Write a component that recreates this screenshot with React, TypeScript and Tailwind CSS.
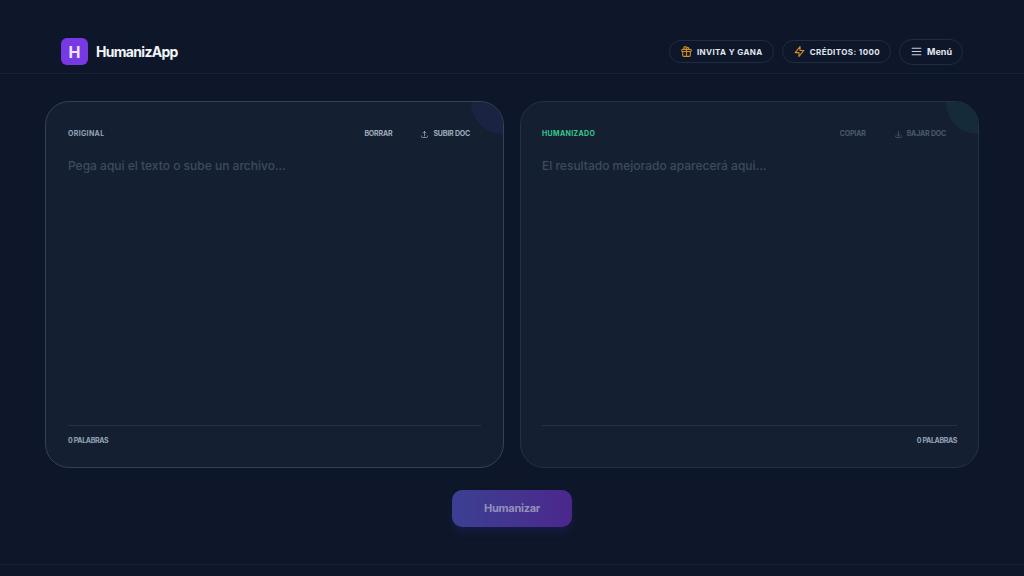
import { useState, type ReactNode } from 'react'
import { HiOutlineDownload, HiOutlineGift, HiOutlineLightningBolt, HiOutlineMenu, HiOutlineUpload } from 'react-icons/hi'

const countWords = (text: string) => text.split(/\s+/).filter(Boolean).length

export default function App() {
  const [original, setOriginal] = useState('')

  return (
    <div className="min-h-screen bg-[#0e1729] font-['Inter',sans-serif] text-slate-100">
      <header className="flex items-center justify-between border-b border-[#172336] px-[61px] pt-[38px] pb-2">
        <a href="#" className="flex items-center gap-2">
          <span className="flex h-[27px] w-[27px] items-center justify-center rounded-md bg-[#7639e4] text-base font-bold text-[#ebe4fb]">
            H
          </span>
          <span className="text-sm font-bold tracking-tighter">HumanizApp</span>
        </a>
        <nav className="flex items-center gap-2">
          <HeaderPill>
            <HiOutlineGift className="h-[13px] w-[13px] text-[#d18f22]" aria-hidden="true" />
            INVITA Y GANA
          </HeaderPill>
          <HeaderPill>
            <HiOutlineLightningBolt className="h-[13px] w-[13px] text-[#d18f22]" aria-hidden="true" />
            CRÉDITOS: 1000
          </HeaderPill>
          <button type="button" className="flex h-[26px] items-center gap-1 rounded-full border border-[#202c3f] px-2.5 text-[9px] font-bold text-slate-200">
            <HiOutlineMenu className="h-[13px] w-[13px] text-slate-300" aria-hidden="true" />
            Menú
          </button>
        </nav>
      </header>

      <main className="px-[45px] pt-[27px]">
        <div className="grid grid-cols-2 gap-4">
          <section className="relative overflow-hidden rounded-3xl border border-[#344252] bg-[#142031] px-[22px] pt-[22px] pb-[21px]">
            <div className="absolute -top-8 -right-8 h-16 w-16 rounded-full bg-[#1a2442]" />
            <div className="relative flex h-5 items-center justify-between">
              <label htmlFor="original" className="text-[7px] font-bold tracking-wider text-[#94a3b8]">
                ORIGINAL
              </label>
              <div className="flex items-center gap-1.5">
                <CardButton onClick={() => setOriginal('')}>BORRAR</CardButton>
                <CardButton>
                  <HiOutlineUpload className="h-[9px] w-[9px]" aria-hidden="true" />
                  SUBIR DOC
                </CardButton>
              </div>
            </div>
            <textarea
              id="original"
              value={original}
              onChange={(event) => setOriginal(event.target.value)}
              placeholder="Pega aqui el texto o sube un archivo..."
              className="relative mt-3 block h-[269px] w-full resize-none bg-transparent text-xs leading-5 font-medium text-slate-200 outline-none placeholder:text-[#3d4b60]"
            />
            <WordCount count={countWords(original)} />
          </section>

          <section className="relative overflow-hidden rounded-3xl border border-[#223242] bg-[#142031] px-[21px] pt-[22px] pb-[21px]">
            <div className="absolute -top-8 -right-8 h-16 w-16 rounded-full bg-[#162b39]" />
            <div className="relative flex h-5 items-center justify-between">
              <label htmlFor="humanized" className="text-[7px] font-bold tracking-wider text-[#34c88f]">
                HUMANIZADO
              </label>
              <div className="flex items-center gap-1.5">
                <CardButton disabled>COPIAR</CardButton>
                <CardButton disabled>
                  <HiOutlineDownload className="h-[9px] w-[9px]" aria-hidden="true" />
                  BAJAR DOC
                </CardButton>
              </div>
            </div>
            <textarea
              id="humanized"
              readOnly
              placeholder="El resultado mejorado aparecerá aqui..."
              className="relative mt-3 block h-[269px] w-full resize-none bg-transparent text-xs leading-5 font-medium text-slate-200 outline-none placeholder:text-[#3d4b60]"
            />
            <WordCount count={0} alignEnd />
          </section>
        </div>

        <div className="flex justify-center pt-[22px] pb-[37px]">
          <button
            type="button"
            disabled={!original}
            className="h-[37px] w-[120px] rounded-[10px] bg-linear-to-r from-[#3b3f92] to-[#4b278d] text-[11px] font-bold tracking-tight text-[#9490b8] shadow-[0_6px_10px_-2px_#2a247566]"
          >
            Humanizar
          </button>
        </div>
      </main>

      <footer className="border-t border-[#172336]" />
    </div>
  )
}

function HeaderPill({ children }: { children: ReactNode }) {
  return (
    <button
      type="button"
      className="flex h-[23px] items-center gap-1 rounded-full border border-[#202c3f] px-2.5 text-[8px] font-bold tracking-wider text-slate-200"
    >
      {children}
    </button>
  )
}

interface CardButtonProps {
  disabled?: boolean
  onClick?: () => void
  children: ReactNode
}

function CardButton({ disabled, onClick, children }: CardButtonProps) {
  return (
    <button
      type="button"
      disabled={disabled}
      onClick={onClick}
      className="flex h-5 items-center gap-1 rounded-md border border-[#162233] px-2.5 text-[7px] font-bold tracking-tight text-[#a0adbf] disabled:text-[#4b596b]"
    >
      {children}
    </button>
  )
}

function WordCount({ count, alignEnd }: { count: number; alignEnd?: boolean }) {
  return (
    <div
      className={`border-t border-[#243242] pt-2.5 text-[7px] leading-[10px] font-bold tracking-tighter text-[#94a3b8] ${alignEnd ? 'text-right' : ''}`}
    >
      {count} PALABRAS
    </div>
  )
}
